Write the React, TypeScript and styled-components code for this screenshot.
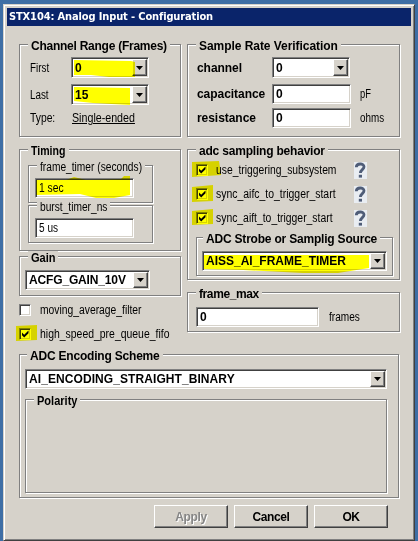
import React from "react";
import styled, { createGlobalStyle } from "styled-components";

const Global = createGlobalStyle`
  *{box-sizing:border-box}
  html,body{margin:0;background:#3e6ea5;overflow:hidden}
  body{font-family:"Liberation Sans",Arial,sans-serif;font-size:12px;line-height:14px;color:#000}
`;

const Desktop = styled.div`height:541px;padding:4px 3px 0 3px;background:#3e6ea5;`;
const Window = styled.div`
  height:537px;background:#d6d2ca;border:1px solid #d6d2ca;border-right:1px solid #404040;border-bottom:1px solid #404040;
  box-shadow:inset 1px 1px #fff,inset -1px -1px #808080;padding:3px;
`;
const TitleBar = styled.header`
  height:18px;background:#0a246a;color:#fff;font:bold 11px/18px "DejaVu Sans Condensed","DejaVu Sans",sans-serif;
  padding-left:2px;white-space:nowrap;letter-spacing:-0.13px;
`;
const Body = styled.main`padding:18px 12px 0;`;
const Columns = styled.div`display:grid;grid-template-columns:162px 213px;column-gap:6px;height:310px;`;
const Column = styled.div`display:flex;flex-direction:column;`;

const Group = styled.section<{ $h: number; $gap?: number; $w?: number; $pad?: number }>`
  position:relative;flex:none;height:${p => p.$h}px;width:${p => (p.$w ? p.$w + "px" : "auto")};
  margin-top:${p => p.$gap ?? 0}px;border:1px solid #808080;padding:0 ${p => p.$pad ?? 8}px;
  box-shadow:1px 1px #fff,inset 1px 1px #fff;
`;
const Legend = styled.h2<{ $s?: number; $plain?: boolean; $in?: number }>`
  margin:-6px 0 0 ${p => p.$in ?? 0}px;width:max-content;height:14px;padding:0 3px;background:#d6d2ca;position:relative;
  white-space:nowrap;font-size:12px;line-height:14px;font-weight:${p => (p.$plain ? 400 : 700)};letter-spacing:${p => p.$s ?? 0}px;
`;
const Row = styled.div<{ $h: number; $mt?: number }>`display:flex;align-items:center;height:${p => p.$h}px;margin-top:${p => p.$mt ?? 0}px;`;
const Text = styled.span<{ $w: number }>`width:${p => p.$w}px;flex:none;white-space:nowrap;font-weight:700;padding-left:1px;letter-spacing:-0.05px;`;
/* Condensed text: $w is the space it takes, $k the horizontal scale. */
const Slim = styled.span<{ $w: number; $k?: number; $ml?: number; $u?: boolean }>`
  display:block;flex:none;width:${p => p.$w}px;margin-left:${p => p.$ml ?? 0}px;white-space:nowrap;
  transform:scaleX(${p => p.$k ?? 0.86});transform-origin:0 50%;text-decoration:${p => (p.$u ? "underline" : "none")};
`;
const Field = styled.div<{ $w: number; $h?: number; $b?: boolean; $s?: number; $mt?: number }>`
  position:relative;flex:none;display:flex;align-items:center;justify-content:space-between;
  width:${p => p.$w}px;height:${p => p.$h ?? 20}px;margin-top:${p => p.$mt ?? 0}px;background:#fff;
  border:1px solid;border-color:#808080 #fff #fff #808080;box-shadow:inset 1px 1px #404040,inset -1px -1px #d6d2ca;
  padding:1px 1px 1px 3px;font-weight:${p => (p.$b ? 700 : 400)};letter-spacing:${p => p.$s ?? 0}px;white-space:nowrap;
`;
const Drop = styled.span`
  width:15px;height:100%;background:#d6d2ca;display:flex;align-items:center;justify-content:center;
  border:1px solid;border-color:#fff #404040 #404040 #fff;box-shadow:inset -1px -1px #808080;
`;
const Arrow = () => <Drop><svg width="7" height="4"><path d="M0 0h7L3.500 4z" /></svg></Drop>;
const Box = styled.span<{ $gap: number }>`
  position:relative;flex:none;width:12px;height:12px;margin-right:${p => p.$gap}px;background:#fff;
  border:1px solid;border-color:#808080 #fff #fff #808080;box-shadow:inset 1px 1px #404040,inset -1px -1px #d6d2ca;
`;
const Tick = styled.svg`display:block;`;
const Marker = styled.svg<{ $x: number; $y: number }>`
  position:absolute;left:${p => p.$x}px;top:${p => p.$y}px;mix-blend-mode:multiply;pointer-events:none;z-index:2;
`;
function Mark({ x, y, w, h, d }: { x: number; y: number; w: number; h: number; d: string }) {
  return <Marker $x={x} $y={y} width={w} height={h}><path d={d} fill="#ff0" /></Marker>;
}
function Check({ on, gap = 9, mark }: { on?: boolean; gap?: number; mark?: React.ReactNode }) {
  return <Box $gap={gap}>{on && <Tick width="10" height="10"><path d="M2 3.500v2.700L4.200 8.500 8.500 4.200V1.500L4.200 5.800z" /></Tick>}{mark}</Box>;
}
const HelpTile = styled.span`width:13px;height:17px;flex:none;margin:0 24px 0 auto;background:#e9edf2;display:flex;`;
const Help = () => (
  <HelpTile><svg width="13" height="17" viewBox="0 0 13 17" fill="none" stroke="#4f5d78">
    <path d="M2.300 5.200C2.500 1 10 1 10 4.800c0 2.700-3.600 3-3.600 6.200" strokeWidth="2.800" /><path d="M4.800 14.200h3.200" strokeWidth="2.800" />
  </svg></HelpTile>
);
const Actions = styled.footer`display:flex;justify-content:flex-end;gap:6px;margin-top:7px;padding-right:11px;`;
const Button = styled.button<{ $off?: boolean }>`
  width:74px;height:23px;padding:0;border:1px solid;border-color:#fff #404040 #404040 #fff;background:#d6d2ca;
  box-shadow:inset -1px -1px #808080;font:bold 12px/14px "Liberation Sans",Arial,sans-serif;letter-spacing:-0.4px;
  color:${p => (p.$off ? "#858585" : "#000")};text-shadow:${p => (p.$off ? "1px 1px #fff" : "none")};
`;

export default function App() {
  return (
    <><Global /><Desktop><Window>
      <TitleBar>STX104: Analog Input - Configuration</TitleBar>
      <Body>
        <Columns>
          <Column>
            <Group $h={93} $pad={8}>
              <Legend $s={-0.25}>Channel Range (Frames)</Legend>
              <Row $h={21} $mt={4}><Slim $ml={2} $w={41} $k={0.82}>First</Slim>
                <Field $w={78} $h={21} $b>0<Arrow />
                  <Mark x={1} y={0} w={65} h={21} d="M1 2L58 3L62 4V19L36 19L18 17L1 17Z" /></Field></Row>
              <Row $h={21} $mt={6}><Slim $ml={2} $w={41} $k={0.82}>Last</Slim>
                <Field $w={78} $h={21} $b>15<Arrow />
                  <Mark x={1} y={0} w={60} h={21} d="M1 2L57 3V20L20 18L1 16Z" /></Field></Row>
              <Row $h={16} $mt={5}><Slim $ml={2} $w={42}>Type:</Slim><Slim $w={62} $k={0.89} $u>Single-ended</Slim></Row>
            </Group>
            <Group $h={102} $gap={12} $pad={8}>
              <Legend><Slim $w={35} $k={0.88}>Timing</Slim></Legend>
              <Group $h={38} $w={125} $gap={7} $pad={6}>
                <Legend $plain $in={2}><Slim $w={102} $k={0.85}>frame_timer (seconds)</Slim></Legend>
                <Field $w={99} $mt={4}><Slim $w={26}>1 sec</Slim>
                  <Mark x={0} y={-4} w={98} h={24} d="M0 5L30 5L38 2L50 5L85 4L88 1H94V20L78 23H60L44 19L0 20Z" /></Field>
              </Group>
              <Group $h={38} $w={125} $gap={2} $pad={6}>
                <Legend $plain $in={2}><Slim $w={67} $k={0.85}>burst_timer_ns</Slim></Legend>
                <Field $w={99} $mt={4}><Slim $w={26} $k={0.84}>5 us</Slim></Field>
              </Group>
            </Group>
            <Group $h={40} $gap={5} $pad={5}>
              <Legend $in={3}><Slim $w={24} $k={0.92}>Gain</Slim></Legend><Field $w={125} $mt={5} $b $s={-0.15}>ACFG_GAIN_10V<Arrow /></Field>
            </Group>
            <Row $h={14} $mt={7}><Check /><Slim $w={102}>moving_average_filter</Slim></Row>
            <Row $h={14} $mt={10}><Check on mark={<Mark x={-4} y={-5} w={22} h={18} d="M0 2L21 1V16L0 17Z" />} /><Slim $w={130} $k={0.87}>high_speed_pre_queue_fifo</Slim></Row>
          </Column>
          <Column>
            <Group $h={93} $pad={8}>
              <Legend $s={-0.05}>Sample Rate Verification</Legend>
              <Row $h={21} $mt={4}><Text $w={76}>channel</Text><Field $w={78} $h={21} $b>0<Arrow /></Field></Row>
              <Row $h={20} $mt={6}><Text $w={76}>capacitance</Text><Field $w={79} $b>0</Field><Slim $ml={9} $w={12} $k={0.78}>pF</Slim></Row>
              <Row $h={20} $mt={4}><Text $w={76}>resistance</Text><Field $w={79} $b>0</Field><Slim $ml={9} $w={24} $k={0.82}>ohms</Slim></Row>
            </Group>
            <Group $h={131} $gap={12} $pad={8}>
              <Legend $s={-0.2}>adc sampling behavior</Legend>
              <Row $h={24}><Check on gap={8} mark={<Mark x={-6} y={-5} w={32} h={18} d="M1 2L28 1L30 15L1 17Z" />} /><Slim $w={120}>use_triggering_subsystem</Slim><Help /></Row>
              <Row $h={24}><Check on gap={8} mark={<Mark x={-6} y={-5} w={32} h={19} d="M1 3L22 1V17L1 18Z" />} /><Slim $w={120} $k={0.87}>sync_aifc_to_trigger_start</Slim><Help /></Row>
              <Row $h={24}><Check on gap={8} mark={<Mark x={-6} y={-5} w={32} h={19} d="M1 3L22 1V16L1 17Z" />} /><Slim $w={120} $k={0.865}>sync_aift_to_trigger_start</Slim><Help /></Row>
              <Group $h={39} $w={197} $gap={7} $pad={5}>
                <Legend $in={1} $s={-0.2}>ADC Strobe or Samplig Source</Legend>
                <Field $w={185} $mt={5} $b>AISS_AI_FRAME_TIMER<Arrow />
                  <Mark x={0} y={0} w={168} h={22} d="M1 3H166V16L135 21H100L40 18L1 17Z" /></Field>
              </Group>
            </Group>
            <Group $h={40} $gap={12} $pad={8}>
              <Legend $s={-0.4}>frame_max</Legend>
              <Row $h={20} $mt={6}><Field $w={123} $b>0</Field><Slim $ml={10} $w={32} $k={0.84}>frames</Slim></Row>
            </Group>
          </Column>
        </Columns>
        <Group $h={144} $pad={5}>
          <Legend $in={2} $s={-0.2}>ADC Encoding Scheme</Legend>
          <Field $w={362} $mt={6} $b $s={0.08}>AI_ENCODING_STRAIGHT_BINARY<Arrow /></Field>
          <Group $h={94} $w={362} $gap={10} $pad={7}><Legend $in={1}><Slim $w={40} $k={0.92}>Polarity</Slim></Legend></Group>
        </Group>
        <Actions><Button $off>Apply</Button><Button>Cancel</Button><Button>OK</Button></Actions>
      </Body>
    </Window></Desktop></>
  );
}
